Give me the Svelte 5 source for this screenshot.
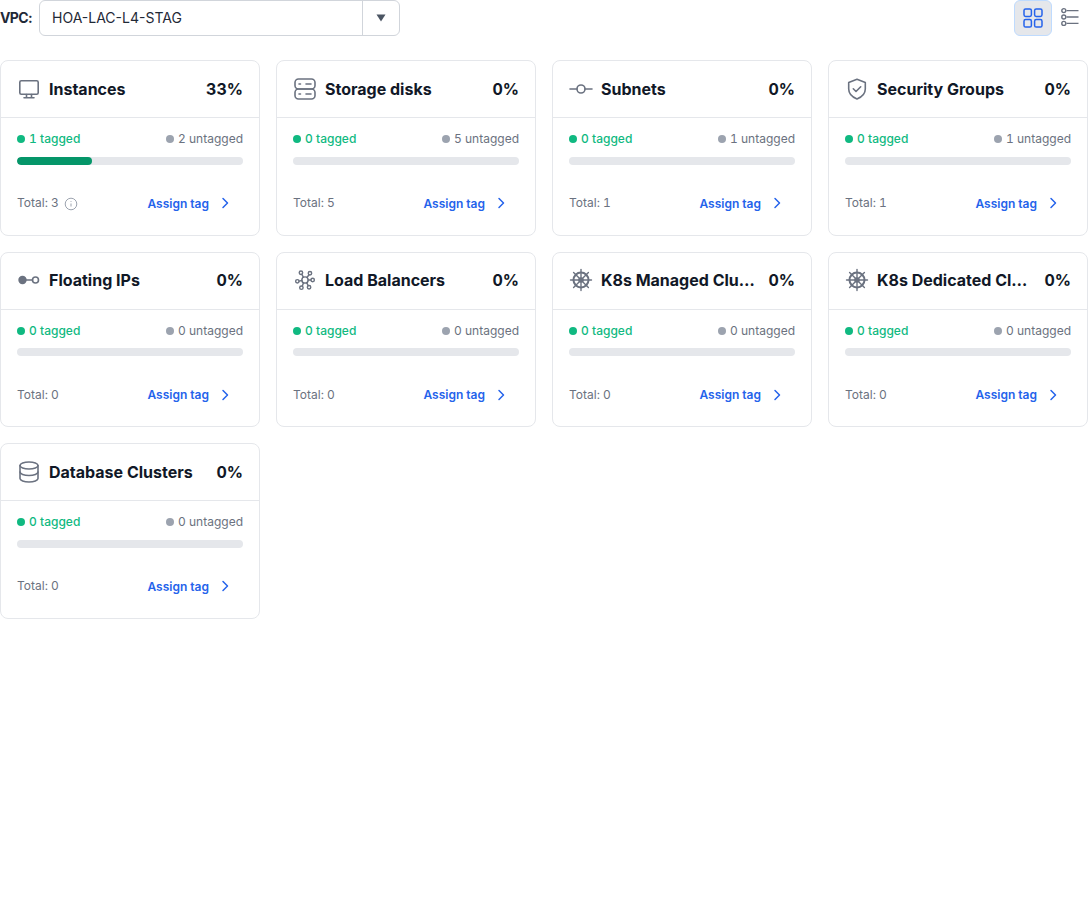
<script>
const cards = [
    { name: "Instances", icon: "monitor", pct: 33, tagged: 1, untagged: 2, total: 3, info: true },
    { name: "Storage disks", icon: "disk", pct: 0, tagged: 0, untagged: 5, total: 5 },
    { name: "Subnets", icon: "subnet", pct: 0, tagged: 0, untagged: 1, total: 1 },
    { name: "Security Groups", icon: "shield", pct: 0, tagged: 0, untagged: 1, total: 1 },
    { name: "Floating IPs", icon: "ip", pct: 0, tagged: 0, untagged: 0, total: 0 },
    { name: "Load Balancers", icon: "lb", pct: 0, tagged: 0, untagged: 0, total: 0 },
    { name: "K8s Managed Clusters", icon: "k8s", pct: 0, tagged: 0, untagged: 0, total: 0 },
    { name: "K8s Dedicated Clusters", icon: "k8s", pct: 0, tagged: 0, untagged: 0, total: 0 },
    { name: "Database Clusters", icon: "db", pct: 0, tagged: 0, untagged: 0, total: 0 }
];
const spokes = [0, 45, 90, 135, 180, 225, 270, 315];
</script>

<div class="page">
    <div class="topbar">
        <div class="vpc">
            <span class="vpc-label">VPC:</span>
            <div class="select">
                <span class="select-value">HOA-LAC-L4-STAG</span>
                <span class="select-arrow">
                    <svg width="10" height="8" viewBox="0 0 10 8"><path d="M0.5 0.5h9L5 7.5z" fill="#4b5563" /></svg>
                </span>
            </div>
        </div>
        <div class="views">
            <button class="view-btn active" aria-label="Grid view">
                <svg width="20" height="20" viewBox="0 0 20 20" fill="none" stroke="#2563eb" stroke-width="1.5">
                    <rect x="1" y="1" width="7.4" height="7.4" rx="1.6" />
                    <rect x="11.6" y="1" width="7.4" height="7.4" rx="1.6" />
                    <rect x="1" y="11.600" width="7.4" height="7.4" rx="1.6" />
                    <rect x="11.6" y="11.600" width="7.4" height="7.4" rx="1.6" />
                </svg>
            </button>
            <button class="view-btn list" aria-label="List view">
                <svg width="20" height="20" viewBox="0 0 20 20" fill="none" stroke="#6b7280" stroke-width="1.4">
                    <circle cx="3.8" cy="3.6" r="2" />
                    <circle cx="3.8" cy="10" r="2" />
                    <circle cx="3.8" cy="16.400" r="2" />
                    <path d="M6.500 3.600h12M6.500 10h12M6.500 16.400h12" />
                </svg>
            </button>
        </div>
    </div>

    <div class="grid">
        {#each cards as card}
        <div class="card">
            <div class="card-head">
                <svg class="card-icon" width="24" height="24" viewBox="0 0 24 24" fill="none" stroke="#6b7280" stroke-width="1.6" stroke-linecap="round" stroke-linejoin="round">
                    {#if card.icon === "monitor"}
                        <rect x="2.8" y="3.8" width="18.4" height="13.4" rx="1.5" />
                        <path d="M9.5 17.5v3M14.500 17.5v3M7 20.700h10" />
                    {:else if card.icon === "disk"}
                        <rect x="2" y="2" width="20" height="10" rx="3.500" />
                        <rect x="2" y="12" width="20" height="10" rx="3.500" />
                        <path d="M13 7h5M6 7h1.500M13 17h5M6 17h1.500" />
                    {:else if card.icon === "subnet"}
                        <circle cx="12" cy="12" r="4" />
                        <path d="M1 12h7M16 12h7" />
                    {:else if card.icon === "shield"}
                        <path d="M12 2.300l8.300 3.100v6.600c0 4.800-3.400 8-8.300 10-4.900-2-8.300-5.200-8.300-10V5.400z" />
                        <path d="M8.300 11.800l2.700 2.700 4.700-4.700" />
                    {:else if card.icon === "ip"}
                        <circle cx="5.500" cy="12" r="3.400" fill="#6b7280" />
                        <circle cx="18.500" cy="12" r="3" />
                        <path d="M8 12h7.500" />
                    {:else if card.icon === "lb"}
                        <g transform="translate(12 12) scale(.9) translate(-12 -12)">
                            <circle cx="12" cy="12" r="3.500" />
                            <circle cx="7.500" cy="4" r="1.900" />
                            <circle cx="17.500" cy="4.500" r="1.900" />
                            <circle cx="3.500" cy="13.500" r="1.900" />
                            <circle cx="20.500" cy="12" r="1.900" />
                            <circle cx="8" cy="20.500" r="1.900" />
                            <circle cx="16.500" cy="20" r="1.900" />
                            <path d="M8.500 5.800l1.800 3.200M16.500 6.200l-2.400 3M5.400 13.200l3.100-.7M18.600 12h-3.100M9 18.800l1.400-3.700M15.600 18.200l-1.800-3.200" />
                        </g>
                    {:else if card.icon === "k8s"}
                        <circle cx="12" cy="12" r="7.500" stroke-width="2" />
                        <circle cx="12" cy="12" r="2" fill="#6b7280" />
                        {#each spokes as a}
                            <path d="M12 10V1.500" transform={`rotate(${a} 12 12)`} stroke-width="1.400" />
                        {/each}
                    {:else}
                        <ellipse cx="12" cy="5.500" rx="9" ry="3.500" />
                        <path d="M3 5.500v13c0 1.900 4 3.500 9 3.500s9-1.600 9-3.500v-13" />
                        <path d="M3 12c0 1.900 4 3.500 9 3.500s9-1.600 9-3.500" />
                    {/if}
                </svg>
                <span class="card-name">{card.name}</span>
                <span class="card-pct">{card.pct}%</span>
            </div>
            <div class="card-body">
                <div class="counts">
                    <span class="count tagged"><i class="dot green"></i>{card.tagged} tagged</span>
                    <span class="count untagged"><i class="dot gray"></i>{card.untagged} untagged</span>
                </div>
                <div class="bar">
                    <div class="bar-fill" style:width={`${card.pct}%`}></div>
                </div>
                <div class="card-foot">
                    <span class="total">
                        Total: {card.total}
                        {#if card.info}
                        <svg class="info" width="14" height="14" viewBox="0 0 14 14" fill="none" stroke="#9ca3af" stroke-width="1">
                            <circle cx="7" cy="7" r="5.800" />
                            <path d="M7 6.500v3M7 4.200v.8" />
                        </svg>
                        {/if}
                    </span>
                    <a class="assign" href="#assign">
                        Assign tag
                        <svg width="16" height="16" viewBox="0 0 16 16" fill="none" stroke="#2563eb" stroke-width="1.500" stroke-linecap="round" stroke-linejoin="round"><path d="M6 3.500L10.500 8 6 12.500" /></svg>
                    </a>
                </div>
            </div>
        </div>
        {/each}
    </div>
</div>

<style>
:global(body) {
    background: #fff;
    font-family: Inter, "Noto Sans", sans-serif;
}

.topbar {
    display: flex;
    justify-content: space-between;
    height: 36px;
    margin-bottom: 24px;
}

.vpc {
    display: flex;
    align-items: center;
    gap: 8px;
}

.vpc-label {
    font-size: 14px;
    font-weight: 700;
    color: #1f2937;
    letter-spacing: -0.6px;
    width: 31px;
    margin-top: -1px;
}

.select {
    display: flex;
    width: 361px;
    height: 36px;
    box-sizing: border-box;
    border: 1px solid #d1d5db;
    border-radius: 6px;
}

.select-value {
    flex: 1;
    padding-left: 12px;
    font-size: 14px;
    line-height: 34px;
    color: #1f2937;
}

.select-arrow {
    width: 36px;
    display: flex;
    align-items: center;
    justify-content: center;
    border-left: 1px solid #d1d5db;
}

.views {
    display: flex;
}

.view-btn {
    width: 38px;
    height: 36px;
    padding: 0;
    display: flex;
    align-items: center;
    justify-content: center;
    border: 1px solid transparent;
    border-radius: 6px;
    background: none;
}

.view-btn.active {
    background: #e5e7eb;
    border-color: #bfdbfe;
}

.view-btn.list {
    width: 36px;
    padding-bottom: 2px;
}

.grid {
    display: grid;
    grid-template-columns: repeat(4, 260px);
    gap: 16px;
}

.card {
    height: 175.500px;
    box-sizing: border-box;
    border: 1px solid #e5e7eb;
    border-radius: 8px;
    overflow: hidden;
}

.card-head {
    display: flex;
    align-items: center;
    height: 57px;
    box-sizing: border-box;
    padding: 0 16px 0.5px;
    border-bottom: 1px solid #e5e7eb;
}

.card-icon {
    flex: none;
    margin-right: 8px;
}

.card-name {
    flex: 1;
    min-width: 0;
    font-size: 16px;
    font-weight: 650;
    color: #111827;
    white-space: nowrap;
    overflow: hidden;
    text-overflow: ellipsis;
}

.card-pct {
    flex: none;
    margin-left: 13px;
    font-size: 16px;
    font-weight: 700;
    color: #111827;
    font-variant-numeric: tabular-nums;
}

.card-body {
    padding: 12px 16px 0;
}

.counts {
    display: flex;
    justify-content: space-between;
    font-size: 12px;
    line-height: 18px;
    font-variant-numeric: tabular-nums;
}

.count {
    display: flex;
    align-items: center;
    gap: 4px;
}

.tagged {
    color: #10b981;
    font-weight: 500;
}

.untagged {
    color: #6b7280;
}

.dot {
    width: 8px;
    height: 8px;
    border-radius: 50%;
}

.green {
    background: #10b981;
}

.gray {
    background: #9ca3af;
}

.bar {
    height: 8px;
    margin-top: 8.750px;
    background: #e5e7eb;
    border-radius: 4px;
    overflow: hidden;
}

.bar-fill {
    height: 100%;
    background: #059669;
    border-radius: 4px;
}

.card-foot {
    display: flex;
    justify-content: space-between;
    align-items: center;
    margin-top: 26.250px;
    height: 24px;
}

.total {
    display: flex;
    align-items: center;
    gap: 5px;
    font-size: 12px;
    color: #6b7280;
    margin-top: -1px;
    font-variant-numeric: tabular-nums;
}

.info {
    margin-top: 2px;
}

.assign {
    display: flex;
    align-items: center;
    gap: 8px;
    padding-right: 10px;
    font-size: 12px;
    font-weight: 600;
    color: #2563eb;
    text-decoration: none;
}
</style>
